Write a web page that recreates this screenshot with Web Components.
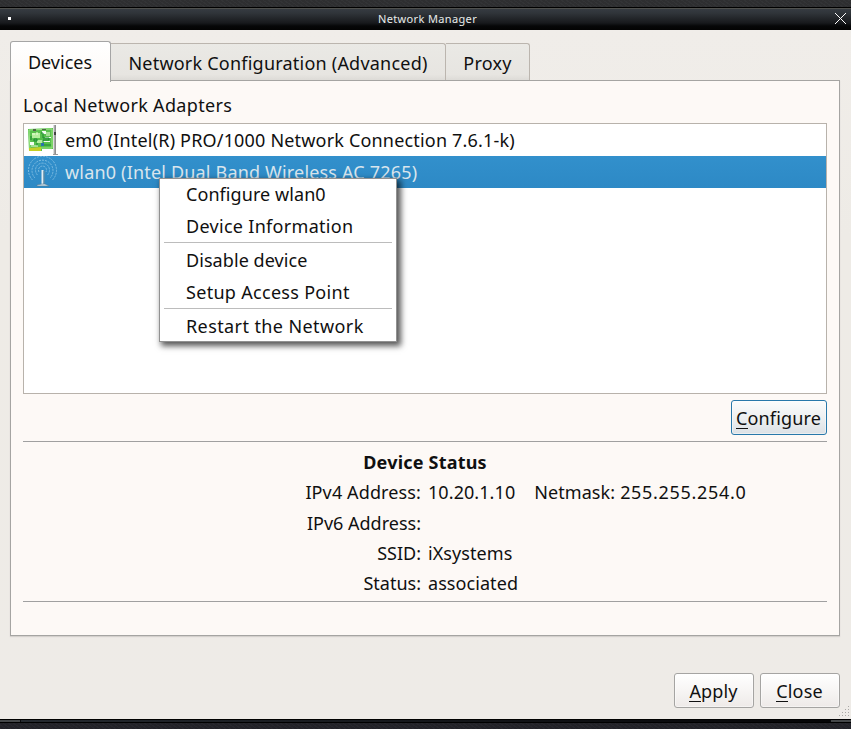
<!DOCTYPE html>
<html lang="en"><head><meta charset="utf-8"><title>Network Manager</title>
<style>html,body{margin:0;width:851px;height:729px;overflow:hidden;background:#28292c}body{font:18px/24px "Noto Sans",sans-serif;color:#101010}</style></head>
<body><network-window></network-window>
<script>
const define=(name,html)=>customElements.define(name,class extends HTMLElement{
  connectedCallback(){ if(!this.shadowRoot) this.attachShadow({mode:'open'}).innerHTML=html; }
});

define('title-bar',`<style>
:host{display:flex;box-sizing:border-box;height:23px;align-items:center;border-top:1px solid #000;padding:0 5px 0 8px;background:linear-gradient(#50514e 0 1px,#363b41 1px,#30353a 5px,#17191c 15px,#060708 18px,#030303);color:#e8ecea;font-size:11px;line-height:22px}
i{width:3px;height:3px;background:#fff;margin-top:-2px}
span{flex:1;text-align:center;letter-spacing:.36px;padding-left:9px}
svg{display:block;margin-top:-1px}
</style><i></i><span><slot></slot></span><svg width="11" height="11" shape-rendering="crispEdges"><path d="M0 0L11 11M11 0L0 11" stroke="#fff" fill="none"/></svg>`);

define('tab-label',`<style>
:host{display:block;box-sizing:border-box;height:37px;border:1px solid #bbb5ae;border-left:0;border-bottom:0;border-radius:0 3px 0 0;background:linear-gradient(#eae9e5,#e7e5e1 85%,#dddbd7);padding:7px 0 0;text-align:center;white-space:nowrap;letter-spacing:.22px}
:host([active]){height:41px;border:1px solid #a5a5a5;border-bottom:0;border-radius:3px 3px 0 0;background:linear-gradient(#fff,#fdf9f6);position:relative;padding:8px 1px 0 0;letter-spacing:0}
</style><slot></slot>`);

define('device-row',`<style>
:host{display:flex;height:32px;align-items:center;padding-left:2px;gap:7px;white-space:nowrap;letter-spacing:.18px}
:host([selected]){background:linear-gradient(#3290cc,#2d89c5);color:#d9e5ed}
::slotted(svg){display:block;width:32px;height:32px;flex:none}
</style><slot name="icon"></slot><span><slot></slot></span>`);

define('push-button',`<style>
:host{display:block;box-sizing:border-box;width:80px;height:35px;border:1px solid #a5a4a2;border-radius:3px;background:linear-gradient(#fff,#f7f5f4 50%,#eeeae8);text-align:center;padding-top:5px;box-shadow:inset 0 0 0 1px #ffffff70;letter-spacing:.15px;text-indent:-1px}
:host([focused]){width:96px;border-color:#2878aa;background:linear-gradient(#fbfcfc,#eef0f1 50%,#dce1e5)}
::slotted(u){text-decoration:none;border-bottom:1px solid #111;display:inline-block;height:22px;line-height:24px;text-indent:0}
</style><slot></slot>`);

define('menu-item',`<style>:host{display:block;height:32px;line-height:32px;padding-left:26px;white-space:nowrap;letter-spacing:.07px}:host([wide]){letter-spacing:.3px}:host([wider]){letter-spacing:.4px}</style><slot></slot>`);
define('menu-line',`<style>:host{display:block;height:1px;background:#bcbcbc;margin:0 4px 1px}</style>`);
define('context-menu',`<style>:host{display:block;box-sizing:border-box;position:absolute;z-index:5;left:159px;top:178px;width:238px;height:164px;border:1px solid #919191;background:#fff;box-shadow:3px 3px 6px 1px #000000a8}::slotted(menu-item:first-child){margin-top:-1px}</style><slot></slot>`);

define('status-table',`<style>
:host{display:block;box-sizing:border-box;height:161px;border-top:1px solid #a0a0a0;border-bottom:1px solid #a0a0a0;padding-top:8px}
b{display:block;text-align:center;height:27px;line-height:24px;letter-spacing:.2px}
.grid{display:grid;grid-template-columns:398px 1fr;column-gap:7px;grid-template-rows:31px 30px 30px 30px;line-height:30px;white-space:nowrap}
.grid>:nth-child(odd){text-align:right}.grid>:nth-child(even){display:flex;letter-spacing:.07px}.m{margin:0 5px 0 19px}.mask{letter-spacing:.68px}.v4{letter-spacing:.12px}.v6{line-height:31px}
</style><b><span>Device Status</span></b><div class="grid"><span class="v4">IPv4 Address:</span><div><span>10.20.1.10</span><span class="m">Netmask:</span><span class="mask">255.255.254.0</span></div><span class="v6">IPv6 Address:</span><div></div><span>SSID:</span><div><span>iXsystems</span></div><span>Status:</span><div><span>associated</span></div></div>`);

define('network-window',`<style>
:host{display:block;width:851px;height:729px;position:relative}
.desk{height:7px;background:repeating-linear-gradient(35deg,#ffffff05 0 1px,#00000008 1px 3px),#2f3032}
main{box-sizing:border-box;height:689px;background:linear-gradient(#f0ede9,#eeebe6 30%,#eeebe7);padding:11px 11px 0 10px;position:relative}
.tabs{display:flex;align-items:flex-end;height:39px;position:relative;z-index:1}
tab-label:nth-child(1){width:101px;margin-bottom:-2px}tab-label:nth-child(2){width:335px}tab-label:nth-child(3){width:84px}
.panel{box-sizing:border-box;height:556px;border:1px solid #a5a4a2;box-shadow:0 1px 1px #d4d1cd;background:#fdf9f6;padding:12px}
.caption{height:30px;line-height:25px;letter-spacing:.33px}
.list{box-sizing:border-box;height:271px;border:1px solid #b8b2ab;background:#fff}
.action{display:flex;justify-content:flex-end;padding:6px 0}
footer{display:flex;justify-content:flex-end;gap:6px;padding-top:37px}
.grip{position:absolute;right:1px;bottom:2px}
.handle{height:4px;display:grid;grid-template-columns:20px 1fr 20px;box-sizing:border-box;border-top:1px solid #000;border-bottom:1px solid #000;background:#090a0d}
.handle i:nth-child(odd){background:#45484a}.handle i:nth-child(2){background:linear-gradient(90deg,#252a30,#0c0d10 75%,#050507);margin:0 1px}
.bottom{height:6px;background:repeating-linear-gradient(35deg,#ffffff05 0 1px,#00000008 1px 3px),#232329}
</style>
<div class="desk"></div><title-bar>Network Manager</title-bar>
<main><div class="tabs"><tab-label active>Devices</tab-label><tab-label>Network Configuration (Advanced)</tab-label><tab-label>Proxy</tab-label></div>
<div class="panel"><div class="caption"><span>Local Network Adapters</span></div>
<div class="list"><device-row>
<svg slot="icon" viewBox="0 0 32 32"><path d="M2 5L27 4V25L16 25V27H3Z" fill="#58c04c"/><path d="M3 6L26 5V24H14V25H4Z" fill="none" stroke="#9be583"/><path d="M6 9h8v5H6zM11 16h6v3h-6z" fill="#b5ee9d"/><path d="M16 7h4v3h-4zM19 13h6v1h-6zM4 18h4v3H4zM17 17h7v1h-7z" fill="#f4fff0"/><path d="M8 15h3v2H8zM15 9h2v5h6v2h-6v5h8M5 12v4M11 19v3" fill="none" stroke="#188831"/><path d="M6 10h3M11 8v3M5 22h7M21 8v4M23 8v4" stroke="#efffda"/><path d="M7 5h3v2H7zM16 5h4v1h-4z" fill="#526449"/><path d="M15 19h3v3h-3z" fill="#2b74ae"/><path d="M3 24l12-1v4H3z" fill="#c6cf24"/><path d="M27 1h3v30h-3z" fill="#a8a8a8"/><path d="M27.500 1v29" stroke="#dedede"/><path d="M29.500 1v29" stroke="#8e8e8e"/><path d="M28 8h2v3h-2z" fill="#444"/><path d="M27 30.500h5" stroke="#9a9a9a"/></svg>em0 (Intel(R) PRO/1000 Network Connection 7.6.1-k)</device-row>
<device-row selected><svg slot="icon" viewBox="0 0 32 32"><g fill="none" stroke="#7dbce2" stroke-width="1" stroke-dasharray="2 1"><path d="M6.500 24A14 14 0 1 1 26.500 24"/><path d="M9 22A10.500 10.500 0 1 1 24 22"/><path d="M11.500 19A7 7 0 1 1 21.500 19"/><path d="M13 16A4 4 0 1 1 20 16"/></g><path d="M15.500 14h2v15h-2z" fill="#e3edf2"/><path d="M18 15v13" stroke="#6c8998"/><path d="M11 29l5-1h3l4 2H11z" fill="#c6dbe8" stroke="#54758a" stroke-width=".5"/></svg>wlan0 (Intel Dual Band Wireless AC 7265)</device-row></div>
<div class="action"><push-button focused><u>C</u>onfigure</push-button></div>
<status-table></status-table></div>
<footer><push-button><u>A</u>pply</push-button><push-button><u>C</u>lose</push-button></footer>
<svg class="grip" width="11" height="11"><g fill="#aaa8a5"><path d="M9 0h1v1H9zM6 3h1v1H6zM9 3h1v1H9zM3 6h1v1H3zM6 6h1v1H6zM9 6h1v1H9zM0 9h1v1H0zM3 9h1v1H3zM6 9h1v1H6zM9 9h1v1H9z"/></g></svg></main>
<div class="handle"><i></i><i></i><i></i></div><div class="bottom"></div>
<context-menu><menu-item>Configure wlan0</menu-item><menu-item wide>Device Information</menu-item><menu-line></menu-line><menu-item>Disable device</menu-item><menu-item wide>Setup Access Point</menu-item><menu-line></menu-line><menu-item wider>Restart the Network</menu-item></context-menu>`);
</script></body></html>
